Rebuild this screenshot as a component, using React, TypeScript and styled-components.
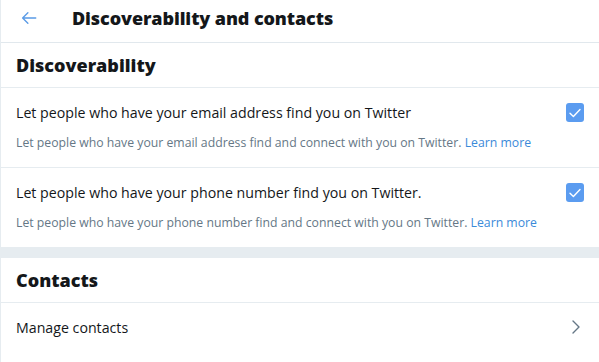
import styled, { createGlobalStyle } from "styled-components";

const GlobalStyle = createGlobalStyle`
  html, body {
    margin: 0;
    padding: 0;
    background: #ffffff;
  }
  body {
    font-family: "Open Sans", "Noto Sans", sans-serif;
    color: #14171a;
  }
`;

interface ISetting {
  label: string;
  detail: string;
}

const settings: ISetting[] = [
  {
    label: "Let people who have your email address find you on Twitter",
    detail:
      "Let people who have your email address find and connect with you on Twitter.",
  },
  {
    label: "Let people who have your phone number find you on Twitter.",
    detail:
      "Let people who have your phone number find and connect with you on Twitter.",
  },
];

function App() {
  return (
    <>
      <GlobalStyle />
      <Page>
        <Header>
          <BackButton aria-label="Back">
            <svg width="18" height="18" viewBox="0 0 24 24" fill="none">
              <path
                d="M21 12H4M10.5 5L3.5 12l7 7"
                stroke="currentColor"
                strokeWidth="1.8"
                strokeLinecap="round"
                strokeLinejoin="round"
              />
            </svg>
          </BackButton>
          <HeaderTitle>Discoverability and contacts</HeaderTitle>
        </Header>

        <SectionTitle>Discoverability</SectionTitle>
        {settings.map((s) => (
          <SettingRow key={s.label}>
            <SettingText>
              <SettingLabel>{s.label}</SettingLabel>
              <SettingDetail>
                {s.detail} <LearnMore href="#">Learn more</LearnMore>
              </SettingDetail>
            </SettingText>
            <Checkbox>
              <svg width="12" height="10" viewBox="0 0 12 10" fill="none">
                <path
                  d="M1 5.2l3.4 3.4L11 1.5"
                  stroke="#ffffff"
                  strokeWidth="1.4"
                  strokeLinecap="round"
                  strokeLinejoin="round"
                />
              </svg>
            </Checkbox>
          </SettingRow>
        ))}

        <Spacer />

        <SectionTitle>Contacts</SectionTitle>
        <LinkRow>
          <LinkLabel>Manage contacts</LinkLabel>
          <svg width="10" height="16" viewBox="0 0 10 16" fill="none">
            <path
              d="M2 2l6 6-6 6"
              stroke="#657786"
              strokeWidth="1.4"
              strokeLinecap="round"
              strokeLinejoin="round"
            />
          </svg>
        </LinkRow>
      </Page>
    </>
  );
}

const Page = styled.div`
  width: 599px;
  min-height: 362px;
  border-left: 1px solid #e6ecf0;
  box-sizing: border-box;
  display: flex;
  flex-direction: column;
`;

const Header = styled.header`
  height: 42px;
  display: flex;
  align-items: center;
  gap: 30px;
  padding: 0 15px;
  border-bottom: 1px solid #e1e8ed;
  box-sizing: content-box;
`;

const BackButton = styled.button`
  border: none;
  background: none;
  padding: 0;
  width: 26px;
  height: 26px;
  display: flex;
  align-items: center;
  justify-content: center;
  color: #5a9be6;
  cursor: pointer;
  margin-top: -6px;
`;

const HeaderTitle = styled.h2`
  margin: 0;
  font-size: 18px;
  font-weight: 800;
  letter-spacing: -0.1px;
  margin-top: -6px;
`;

const SectionTitle = styled.h3`
  margin: 0;
  height: 44px;
  display: flex;
  align-items: center;
  padding: 0 15px;
  font-size: 18px;
  font-weight: 800;
  border-bottom: 1px solid #e6ecf0;
`;

const SettingRow = styled.div`
  display: flex;
  align-items: flex-start;
  justify-content: space-between;
  padding: 15px 15px 16px 15px;
  border-bottom: 1px solid #e6ecf0;
  &:last-of-type {
    border-bottom: none;
  }
`;

const SettingText = styled.div`
  display: flex;
  flex-direction: column;
  gap: 12px;
`;

const SettingLabel = styled.div`
  font-size: 14.2px;
  line-height: 20px;
  color: #14171a;
`;

const SettingDetail = styled.div`
  font-size: 12.25px;
  line-height: 16px;
  color: #657786;
`;

const LearnMore = styled.a`
  color: #3b8ad9;
  text-decoration: none;
`;

const Checkbox = styled.span`
  width: 18px;
  height: 19px;
  border-radius: 3px;
  background: #5b9cf0;
  display: flex;
  align-items: center;
  justify-content: center;
  flex-shrink: 0;
`;

const Spacer = styled.div`
  height: 10px;
  background: #e6ecf0;
`;

const LinkRow = styled.div`
  display: flex;
  align-items: center;
  justify-content: space-between;
  padding: 0 18px 0 15px;
  height: 48px;
`;

const LinkLabel = styled.span`
  font-size: 14.2px;
  color: #14171a;
`;

export default App;
